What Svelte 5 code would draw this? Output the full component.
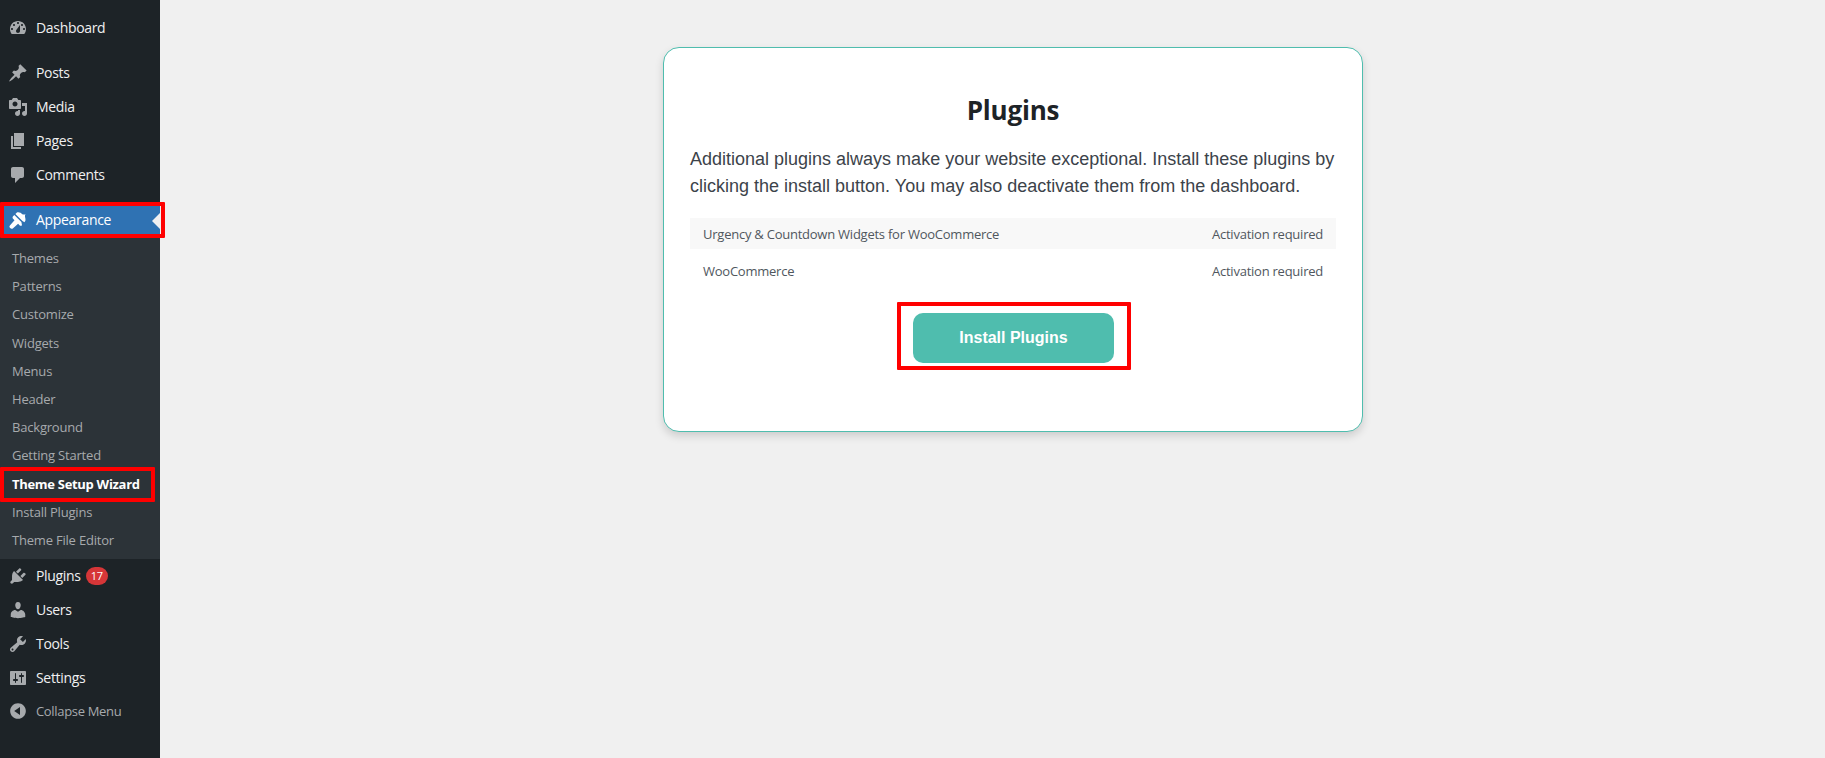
<script lang="ts">
  // dashicons-style paths on a 20x20 box
  const icons: Record<string, string> = {
    dashboard:
      "M3.76 16h12.48c1.1-1.37 1.76-3.11 1.76-5 0-4.42-3.58-8-8-8s-8 3.58-8 8c0 1.89.66 3.63 1.76 5zM10 4c.55 0 1 .45 1 1s-.45 1-1 1-1-.45-1-1 .45-1 1-1zM6 6c.55 0 1 .45 1 1s-.45 1-1 1-1-.45-1-1 .45-1 1-1zm8 0c.55 0 1 .45 1 1s-.45 1-1 1-1-.45-1-1 .45-1 1-1zm-5.37 5.55L12 7v6c0 1.1-.9 2-2 2s-2-.9-2-2c0-.57.24-1.08.63-1.45zM4 10c.55 0 1 .45 1 1s-.45 1-1 1-1-.45-1-1 .45-1 1-1zm12 0c.55 0 1 .45 1 1s-.45 1-1 1-1-.45-1-1 .45-1 1-1z",
    post: "M10.44 3.02l1.82-1.82 6.36 6.35-1.83 1.82c-1.05-.68-2.48-.57-3.41.36l-.75.75c-.92.93-1.04 2.35-.35 3.41l-1.83 1.82-2.41-2.41-2.8 2.79c-.42.42-3.38 2.71-3.8 2.29s1.86-3.39 2.28-3.81l2.79-2.79L4.1 9.36l1.83-1.82c1.05.69 2.48.57 3.4-.36l.75-.75c.93-.92 1.05-2.35.36-3.41z",
    media:
      "M13 11V4c0-.55-.45-1-1-1h-1.67L9 1H5L3.67 3H2c-.55 0-1 .45-1 1v7c0 .55.45 1 1 1h10c.55 0 1-.45 1-1zM7 4.5c1.38 0 2.5 1.12 2.5 2.5S8.38 9.5 7 9.5 4.5 8.38 4.5 7 5.62 4.5 7 4.5zM14 6h5v10.5c0 1.38-1.12 2.5-2.5 2.5S14 17.88 14 16.5s1.12-2.5 2.5-2.5c.17 0 .34.02.5.05V9h-3V6zm-4 8.05V13h2v3.5c0 1.38-1.12 2.5-2.5 2.5S7 17.88 7 16.5 8.12 14 9.5 14c.17 0 .34.02.5.05z",
    page: "M6 15V2h10v13H6zm-1 1h8v2H3V5h2v11z",
    comments:
      "M5 2h9c1.1 0 2 .9 2 2v7c0 1.1-.9 2-2 2h-2l-5 5v-5H5c-1.1 0-2-.9-2-2V4c0-1.1.9-2 2-2z",
    appearance:
      "M14.48 11.06L7.41 3.99l1.5-1.5c.5-.56 2.3-.47 3.59.32 1.28.79 1.49 1.78 2.62 1.76 1.12-.02 2.38-.3 2.38-.3s-.73 1.28-.5 2.55c.21 1.2.6 2.1.5 3.2-.1 1.1-.6 1.7-1.05 2.14zM13.4 12.1L6.3 5.1l-1.2 1.2c-.7.7-.7 1.8 0 2.5l1.4 1.4-4.6 5.3c-.9 1-.3 2 .3 2.6.6.6 1.6 1.2 2.6.3l5.3-4.6 1.4 1.4c.7.7 1.8.7 2.5 0z",
    plugins:
      "M13.11 4.36L9.87 7.6 8 5.73l3.24-3.24c.35-.34 1.05-.2 1.56.32.52.51.66 1.21.31 1.55zm-8 1.77l.91-1.12 9.01 9.01-1.19.84c-.71.71-2.63 1.16-3.82 1.16H6.14L4.9 17.26c-.59.59-1.54.59-2.12 0-.59-.58-.59-1.53 0-2.12l1.24-1.24v-3.88c0-1.13.4-3.19 1.09-3.89zm7.26 3.97l3.24-3.24c.34-.35 1.04-.21 1.55.31.52.51.66 1.21.31 1.55l-3.24 3.25z",
    users:
      "M10 9.25c-2.27 0-2.73-3.44-2.73-3.44C7 4.02 7.82 2 9.97 2c2.16 0 2.98 2.02 2.71 3.81 0 0-.41 3.44-2.68 3.44zm0 2.57L12.72 10c2.39 0 4.52 2.33 4.52 4.53v2.49s-3.65 1.13-7.24 1.13c-3.65 0-7.24-1.13-7.24-1.13v-2.49c0-2.25 1.94-4.48 4.47-4.48z",
    tools:
      "M16.68 9.77c-1.34 1.34-3.3 1.67-4.95.99l-5.41 6.52c-.99.99-2.59.99-3.58 0s-.99-2.59 0-3.57l6.52-5.42c-.68-1.65-.35-3.61.99-4.95 1.28-1.28 3.12-1.62 4.72-1.06l-2.89 2.89 2.82 2.82 2.86-2.87c.53 1.58.18 3.39-1.08 4.65zM3.81 16.21c.4.39 1.04.39 1.43 0 .4-.4.4-1.04 0-1.43-.39-.4-1.03-.4-1.43 0-.39.39-.39 1.03 0 1.43z",
    settings:
      "M18 16V4c0-.55-.45-1-1-1H3c-.55 0-1 .45-1 1v12c0 .55.45 1 1 1h14c.55 0 1-.45 1-1zM8 11h1c.55 0 1 .45 1 1s-.45 1-1 1H8v1.5c0 .28-.22.5-.5.5s-.5-.22-.5-.5V13H6c-.55 0-1-.45-1-1s.45-1 1-1h1V5.5c0-.28.22-.5.5-.5s.5.22.5.5V11zm5-2h-1c-.55 0-1-.45-1-1s.45-1 1-1h1V5.5c0-.28.22-.5.5-.5s.5.22.5.5V7h1c.55 0 1 .45 1 1s-.45 1-1 1h-1v5.5c0 .28-.22.5-.5.5s-.5-.22-.5-.5V9z",
    collapse:
      "M10 2.16c4.33 0 7.84 3.51 7.84 7.84s-3.51 7.84-7.84 7.84S2.16 14.33 2.16 10 5.71 2.16 10 2.16zm2 11.72V6.12L6.18 9.97z",
  };

  const submenu = [
    "Themes",
    "Patterns",
    "Customize",
    "Widgets",
    "Menus",
    "Header",
    "Background",
    "Getting Started",
    "Theme Setup Wizard",
    "Install Plugins",
    "Theme File Editor",
  ];

  const plugins = ["Urgency & Countdown Widgets for WooCommerce", "WooCommerce"];
</script>

{#snippet menuItem(icon: string, label: string)}
  <div class="item">
    <svg class="icon" viewBox="0 0 20 20"><path fill-rule="evenodd" d={icons[icon]} /></svg>
    <span>{label}</span>
  </div>
{/snippet}

<div class="layout">
  <nav class="sidebar">
    {@render menuItem("dashboard", "Dashboard")}
    <div class="separator"></div>
    {@render menuItem("post", "Posts")}
    {@render menuItem("media", "Media")}
    {@render menuItem("page", "Pages")}
    {@render menuItem("comments", "Comments")}
    <div class="separator"></div>
    <div class="item active">
      <svg class="icon" viewBox="0 0 20 20"><path fill-rule="evenodd" d={icons.appearance} /></svg>
      <span>Appearance</span>
      <i class="arrow"></i>
      <i class="mark mark-menu"></i>
    </div>
    <div class="submenu">
      {#each submenu as name}
        <div class="sub" class:current={name === "Theme Setup Wizard"}>
          {name}
          {#if name === "Theme Setup Wizard"}
            <i class="mark mark-sub"></i>
          {/if}
        </div>
      {/each}
    </div>
    <div class="item">
      <svg class="icon" viewBox="0 0 20 20"><path fill-rule="evenodd" d={icons.plugins} /></svg>
      <span>Plugins</span>
      <b class="badge">17</b>
    </div>
    {@render menuItem("users", "Users")}
    {@render menuItem("tools", "Tools")}
    {@render menuItem("settings", "Settings")}
    <div class="item collapse">
      <svg class="icon" viewBox="0 0 20 20"><path fill-rule="evenodd" d={icons.collapse} /></svg>
      <span>Collapse Menu</span>
    </div>
  </nav>

  <main class="content">
    <section class="card">
      <h1>Plugins</h1>
      <p>
        Additional plugins always make your website exceptional. Install these plugins by clicking
        the install button. You may also deactivate them from the dashboard.
      </p>
      <div class="list">
        {#each plugins as name}
          <div class="row">
            <span>{name}</span>
            <span>Activation required</span>
          </div>
        {/each}
      </div>
      <div class="actions">
        <div class="highlight">
          <button>Install Plugins</button>
        </div>
      </div>
    </section>
  </main>
</div>

<style>
  :global(body) {
    background: #f0f0f0;
    overflow: hidden;
  }

  .layout {
    display: flex;
    min-height: 758px;
    font-family: "Open Sans", "Noto Sans", sans-serif;
  }

  .sidebar {
    flex: none;
    width: 160px;
    padding-top: 11px;
    background: #1d2327;
    color: #f0f0f1;
    font-size: 14px;
    letter-spacing: -0.32px;
  }

  .separator {
    height: 11px;
  }

  .item {
    position: relative;
    display: flex;
    align-items: center;
    height: 34px;
  }

  .item span {
    margin-top: -1px;
  }

  .icon {
    flex: none;
    width: 20px;
    height: 20px;
    margin: 0 8px 0 8px;
    fill: #a7aaad;
  }

  .active {
    background: #2f72b3;
    color: #fff;
  }

  .active .icon {
    fill: #fff;
  }

  .arrow {
    position: absolute;
    right: 0;
    top: 10px;
    border: 8px solid transparent;
    border-right-color: #f0f0f1;
    border-left-width: 0;
  }

  .mark {
    position: absolute;
    border: 4px solid #f00;
    border-radius: 1px;
    pointer-events: none;
  }

  .mark-menu {
    left: 0;
    top: -1px;
    width: 157px;
    height: 28px;
  }

  .mark-sub {
    left: 0;
    top: -3px;
    width: 147px;
    height: 27px;
  }

  .submenu {
    padding: 7px 0 5px;
    background: #2c3338;
    font-size: 13px;
    color: #a7aaad;
    letter-spacing: -0.2px;
  }

  .sub {
    position: relative;
    height: 28.2px;
    line-height: 28px;
    padding-left: 12px;
  }

  .current {
    color: #fff;
    font-weight: 700;
    letter-spacing: -0.3px;
  }

  .badge {
    display: inline-block;
    min-width: 22px;
    height: 18px;
    margin-left: 5px;
    border-radius: 9px;
    background: #d63638;
    color: #fff;
    font-size: 11px;
    font-weight: 400;
    line-height: 18px;
    text-align: center;
  }

  .collapse {
    height: 32px;
    color: #a7aaad;
    font-size: 13px;
  }

  .content {
    flex: 1;
    display: flex;
    justify-content: center;
    align-items: flex-start;
    padding: 47px 0 0 41px;
  }

  .card {
    box-sizing: border-box;
    width: 700px;
    height: 385px;
    padding: 0 26px;
    background: #fff;
    border: 1px solid #4fbdae;
    border-radius: 16px;
    box-shadow: 0 4px 8px rgba(0, 0, 0, 0.15);
  }

  h1 {
    margin: 45px 0 0;
    color: #1d2327;
    font-size: 26px;
    font-weight: 700;
    line-height: 34px;
    letter-spacing: -0.2px;
    text-align: center;
  }

  p {
    margin: 19px 0 0;
    color: #3c434a;
    font-family: "Liberation Sans", Arial, sans-serif;
    font-size: 18px;
    line-height: 27px;
  }

  .list {
    margin-top: 18px;
    color: #50575e;
    font-size: 13px;
    letter-spacing: -0.24px;
  }

  .row {
    display: flex;
    justify-content: space-between;
    align-items: center;
    height: 31px;
    padding: 0 13px;
    margin-bottom: 6px;
  }

  .row:first-child {
    background: #f8f8f8;
  }

  .actions {
    display: flex;
    justify-content: center;
    margin-top: 16px;
    padding-left: 2px;
  }

  .highlight {
    padding: 7px 13px 3px 12px;
    border: 4px solid #f00;
    border-radius: 1px;
  }

  button {
    display: block;
    width: 201px;
    height: 50px;
    padding: 0;
    border: 0;
    border-radius: 10px;
    background: #4fbdae;
    color: #fff;
    font-family: "Liberation Sans", Arial, sans-serif;
    font-size: 16px;
    font-weight: 700;
  }
</style>
